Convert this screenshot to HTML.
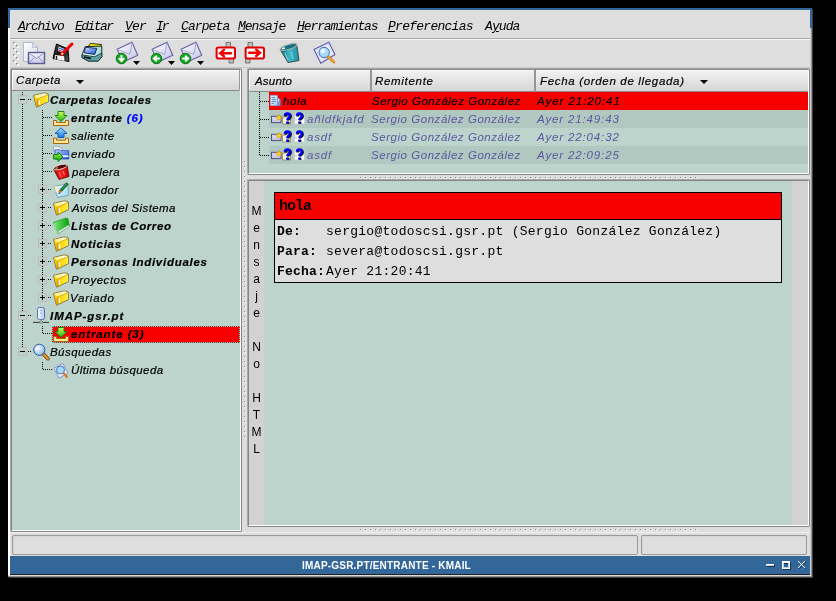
<!DOCTYPE html>
<html><head><meta charset="utf-8">
<style>
*{margin:0;padding:0;box-sizing:border-box}
html,body{width:836px;height:601px;overflow:hidden;background:#000}
body{position:relative;font-family:"Liberation Sans",sans-serif;font-size:11px;color:#000}
.a{position:absolute}
div.a:not(:empty){will-change:transform}
svg.a{overflow:visible}
.menu{font-family:"Liberation Mono",monospace;font-style:italic;font-size:13px;line-height:15px;white-space:nowrap}
.ht{font-style:italic;font-size:11.5px;letter-spacing:0.5px;line-height:14px;white-space:nowrap;-webkit-text-stroke:0.2px #000}
.ti{font-style:italic;font-size:11.5px;letter-spacing:0.5px;line-height:14px;white-space:nowrap;-webkit-text-stroke:0.2px currentColor}
.tb{font-weight:bold;letter-spacing:0.6px}
.mono{font-family:"Liberation Mono",monospace;white-space:pre}
.dv{background:repeating-linear-gradient(to bottom,#000 0,#000 1px,transparent 1px,transparent 2px);width:1px}
.dh{background:repeating-linear-gradient(to right,#000 0,#000 1px,transparent 1px,transparent 2px);height:1px}
</style></head><body>

<div class="a" style="left:8px;top:8px;width:804px;height:569px;background:#dedede"></div>
<div class="a" style="left:8px;top:8px;width:804px;height:2px;background:#336699"></div>
<div class="a" style="left:8px;top:8px;width:2px;height:20px;background:#336699"></div>
<div class="a" style="left:810px;top:8px;width:2px;height:20px;background:#336699"></div>
<div class="a" style="left:8px;top:28px;width:2px;height:549px;background:#fff"></div>
<div class="a" style="left:810px;top:28px;width:1px;height:549px;background:#d0d0d0"></div>
<div class="a" style="left:811px;top:28px;width:1px;height:550px;background:#909090"></div>
<div class="a" style="left:812px;top:9px;width:1px;height:569px;background:#404040"></div>
<div class="a menu" style="left:18.2px;top:19px;letter-spacing:-1.317px"><u>A</u>rchivo</div>
<div class="a menu" style="left:75.2px;top:19px;letter-spacing:-1.54px"><u>E</u>ditar</div>
<div class="a menu" style="left:124.8px;top:19px;letter-spacing:-0.85px"><u>V</u>er</div>
<div class="a menu" style="left:156.1px;top:19px;letter-spacing:-2.1px"><u>I</u>r</div>
<div class="a menu" style="left:180.6px;top:19px;letter-spacing:-0.901px"><u>C</u>arpeta</div>
<div class="a menu" style="left:238.2px;top:19px;letter-spacing:-1.034px"><u>M</u>ensaje</div>
<div class="a menu" style="left:296.6px;top:19px;letter-spacing:-1.091px"><u>H</u>erramientas</div>
<div class="a menu" style="left:388.0px;top:19px;letter-spacing:-0.737px"><u>P</u>referencias</div>
<div class="a menu" style="left:485.1px;top:19px;letter-spacing:-0.9px">A<u>y</u>uda</div>
<div class="a" style="left:10px;top:38px;width:800px;height:1px;background:#a8a8a8"></div>
<div class="a" style="left:10px;top:39px;width:800px;height:1px;background:#f6f6f6"></div>
<div class="a" style="left:13px;top:42px;width:2px;height:2px;background:#a8a8a8"></div>
<div class="a" style="left:14px;top:43px;width:2px;height:2px;background:#fafafa"></div>
<div class="a" style="left:13px;top:42px;width:1px;height:1px;background:#909090"></div>
<div class="a" style="left:13px;top:48px;width:2px;height:2px;background:#a8a8a8"></div>
<div class="a" style="left:14px;top:49px;width:2px;height:2px;background:#fafafa"></div>
<div class="a" style="left:13px;top:48px;width:1px;height:1px;background:#909090"></div>
<div class="a" style="left:13px;top:54px;width:2px;height:2px;background:#a8a8a8"></div>
<div class="a" style="left:14px;top:55px;width:2px;height:2px;background:#fafafa"></div>
<div class="a" style="left:13px;top:54px;width:1px;height:1px;background:#909090"></div>
<div class="a" style="left:13px;top:60px;width:2px;height:2px;background:#a8a8a8"></div>
<div class="a" style="left:14px;top:61px;width:2px;height:2px;background:#fafafa"></div>
<div class="a" style="left:13px;top:60px;width:1px;height:1px;background:#909090"></div>
<div class="a" style="left:16px;top:45px;width:2px;height:2px;background:#a8a8a8"></div>
<div class="a" style="left:17px;top:46px;width:2px;height:2px;background:#fafafa"></div>
<div class="a" style="left:16px;top:45px;width:1px;height:1px;background:#909090"></div>
<div class="a" style="left:16px;top:51px;width:2px;height:2px;background:#a8a8a8"></div>
<div class="a" style="left:17px;top:52px;width:2px;height:2px;background:#fafafa"></div>
<div class="a" style="left:16px;top:51px;width:1px;height:1px;background:#909090"></div>
<div class="a" style="left:16px;top:57px;width:2px;height:2px;background:#a8a8a8"></div>
<div class="a" style="left:17px;top:58px;width:2px;height:2px;background:#fafafa"></div>
<div class="a" style="left:16px;top:57px;width:1px;height:1px;background:#909090"></div>
<div class="a" style="left:16px;top:63px;width:2px;height:2px;background:#a8a8a8"></div>
<div class="a" style="left:17px;top:64px;width:2px;height:2px;background:#fafafa"></div>
<div class="a" style="left:16px;top:63px;width:1px;height:1px;background:#909090"></div>
<svg class="a" style="left:22px;top:41px" width="24" height="24" viewBox="0 0 24 24"><defs><linearGradient id="pg" x1="0" y1="0" x2="1" y2="1"><stop offset="0" stop-color="#ffffff"/><stop offset="1" stop-color="#d8dce8"/></linearGradient>
<linearGradient id="ev" x1="0" y1="0" x2="0" y2="1"><stop offset="0" stop-color="#f4f4fc"/><stop offset="1" stop-color="#c8c8e8"/></linearGradient></defs>
<path d="M1.5 1.5H10.5L15.5 6.5V20.5H1.5Z" fill="url(#pg)" stroke="#b0b8d0" stroke-width="1"/>
<path d="M10.5 1.5V6.5H15.5Z" fill="#e0e4f0" stroke="#b0b8d0" stroke-width="0.8"/>
<rect x="6.5" y="11.5" width="16" height="11" fill="url(#ev)" stroke="#5a5a90" stroke-width="1.4"/>
<path d="M7.5 12.5L14.5 17.5L21.5 12.5M7.5 21.5L12.5 16.5M21.5 21.5L16.5 16.5" fill="none" stroke="#8a8ab8" stroke-width="0.9"/></svg>
<svg class="a" style="left:52px;top:42px" width="22" height="21" viewBox="0 0 22 21"><defs><linearGradient id="fl" x1="0" y1="0" x2="1" y2="1"><stop offset="0" stop-color="#505050"/><stop offset="0.5" stop-color="#101010"/><stop offset="1" stop-color="#606060"/></linearGradient></defs>
<path d="M4.5 2L16 7L17 19.5L1 16.5Z" fill="url(#fl)" stroke="#000" stroke-width="1"/>
<path d="M6.5 4.5L13 7L12.5 11L6 9Z" fill="#e8f0ff"/>
<path d="M6.5 6L12.8 8.2" stroke="#3060e0" stroke-width="1.3"/>
<path d="M6.3 8L12.6 10" stroke="#e02020" stroke-width="1"/>
<path d="M3 13L12 14L12.5 19L2.5 17Z" fill="#f0f0f0"/>
<path d="M4.5 14V17.5" stroke="#202020" stroke-width="1.4"/>
<path d="M9.5 12.5L20 2" stroke="#f00000" stroke-width="3" stroke-linecap="round"/>
<path d="M9.5 12.5L11 11" stroke="#f0c080" stroke-width="2.2"/></svg>
<svg class="a" style="left:81px;top:42px" width="22" height="21" viewBox="0 0 22 21"><defs><linearGradient id="pr" x1="0" y1="0" x2="1" y2="0"><stop offset="0" stop-color="#e8ffff"/><stop offset="1" stop-color="#a8d8d8"/></linearGradient>
<linearGradient id="pb" x1="0" y1="0" x2="1" y2="1"><stop offset="0" stop-color="#d8e8ff"/><stop offset="0.6" stop-color="#5888f0"/><stop offset="1" stop-color="#3060d0"/></linearGradient></defs>
<path d="M9.4 1.4L20.8 2.6L18 5.7L7.2 4.6Z" fill="#ffee00" stroke="#202000" stroke-width="0.9"/>
<path d="M1.1 12.9L4.3 4.6L18 4.2L20.8 4.2L20.8 14.7L17.3 19L7.2 19L1 15.5Z" fill="url(#pr)" stroke="#102828" stroke-width="1"/>
<path d="M1.1 12.9L13.5 14.8L20.8 11L20.8 14.7L17.3 19L7.2 19L1 15.5Z" fill="#58a8a8" stroke="#102828" stroke-width="0.8"/>
<path d="M4.3 5.3L15.8 6.4L13.7 12.4L3.4 10.9Z" fill="url(#pb)" stroke="#102040" stroke-width="0.9"/>
<path d="M3 15L10 16.5" stroke="#000" stroke-width="1.6"/>
<circle cx="17.5" cy="15.5" r="0.7" fill="#e04040"/></svg>
<svg class="a" style="left:115px;top:41px" width="24" height="23" viewBox="0 0 24 23"><defs><linearGradient id="edown" x1="0" y1="0" x2="1" y2="1"><stop offset="0" stop-color="#ffffff"/><stop offset="1" stop-color="#c0c0e4"/></linearGradient></defs>
<path d="M2.1 8.2L17 1.2L22.8 14.2L8 21Z" fill="url(#edown)" stroke="#6464a8" stroke-width="1.1"/>
<path d="M2.6 8.6L14.7 13.3L17.2 1.8" fill="none" stroke="#a0a0cc" stroke-width="0.9"/>
<circle cx="6.5" cy="17.5" r="5.3" fill="#10a820" stroke="#005800" stroke-width="0.8"/>
<path d="M0 -3.4V2.4M-2.7 -0.3L0 2.7L2.7 -0.3" transform="translate(6.5,17.5)" fill="none" stroke="#fff" stroke-width="1.9"/></svg>
<svg class="a" style="left:133px;top:61px" width="7" height="4" viewBox="0 0 7 4"><path d="M0 0H7L3.5 4Z" fill="#000"/></svg>
<svg class="a" style="left:150px;top:41px" width="24" height="23" viewBox="0 0 24 23"><defs><linearGradient id="eleft" x1="0" y1="0" x2="1" y2="1"><stop offset="0" stop-color="#ffffff"/><stop offset="1" stop-color="#c0c0e4"/></linearGradient></defs>
<path d="M2.1 8.2L17 1.2L22.8 14.2L8 21Z" fill="url(#eleft)" stroke="#6464a8" stroke-width="1.1"/>
<path d="M2.6 8.6L14.7 13.3L17.2 1.8" fill="none" stroke="#a0a0cc" stroke-width="0.9"/>
<circle cx="6.5" cy="17.5" r="5.3" fill="#10a820" stroke="#005800" stroke-width="0.8"/>
<path d="M3.4 0H-2.4M0.3 -2.7L-2.7 0L0.3 2.7" transform="translate(6.5,17.5)" fill="none" stroke="#fff" stroke-width="1.9"/></svg>
<svg class="a" style="left:168px;top:61px" width="7" height="4" viewBox="0 0 7 4"><path d="M0 0H7L3.5 4Z" fill="#000"/></svg>
<svg class="a" style="left:179px;top:41px" width="24" height="23" viewBox="0 0 24 23"><defs><linearGradient id="eright" x1="0" y1="0" x2="1" y2="1"><stop offset="0" stop-color="#ffffff"/><stop offset="1" stop-color="#c0c0e4"/></linearGradient></defs>
<path d="M2.1 8.2L17 1.2L22.8 14.2L8 21Z" fill="url(#eright)" stroke="#6464a8" stroke-width="1.1"/>
<path d="M2.6 8.6L14.7 13.3L17.2 1.8" fill="none" stroke="#a0a0cc" stroke-width="0.9"/>
<circle cx="6.5" cy="17.5" r="5.3" fill="#10a820" stroke="#005800" stroke-width="0.8"/>
<path d="M-3.4 0H2.4M-0.3 -2.7L2.7 0L-0.3 2.7" transform="translate(6.5,17.5)" fill="none" stroke="#fff" stroke-width="1.9"/></svg>
<svg class="a" style="left:197px;top:61px" width="7" height="4" viewBox="0 0 7 4"><path d="M0 0H7L3.5 4Z" fill="#000"/></svg>
<svg class="a" style="left:215px;top:41px" width="22" height="23" viewBox="0 0 22 23"><path d="M11 1.5h4.5v5h-4.5z" fill="#c0c0c0" stroke="#606060" stroke-width="0.8"/>
<path d="M14 17.5h4.5v4.5h-4.5z" fill="#c0c0c0" stroke="#606060" stroke-width="0.8"/>
<rect x="1.6" y="6.6" width="18.4" height="11" rx="1.8" fill="#fafafa" stroke="#e00000" stroke-width="2"/>
<path d="M16 12.2H5.2M9 8.8L5.2 12.2L9 15.4" fill="none" stroke="#f00000" stroke-width="2.4" stroke-linecap="round"/></svg>
<svg class="a" style="left:244px;top:41px" width="22" height="23" viewBox="0 0 22 23"><path d="M4 1.5h4.5v5h-4.5z" fill="#c0c0c0" stroke="#606060" stroke-width="0.8"/>
<path d="M1.5 17.5h4.5v4.5h-4.5z" fill="#c0c0c0" stroke="#606060" stroke-width="0.8"/>
<rect x="1.6" y="6.6" width="18.4" height="11" rx="1.8" fill="#fafafa" stroke="#e00000" stroke-width="2"/>
<path d="M5.2 11.8H16M12.2 8.6L16 11.8L12.2 15" fill="none" stroke="#f00000" stroke-width="2.4" stroke-linecap="round"/></svg>
<svg class="a" style="left:279px;top:42px" width="22" height="22" viewBox="0 0 22 22"><defs><linearGradient id="tr" x1="0" y1="0" x2="1" y2="0"><stop offset="0" stop-color="#107080"/><stop offset="0.5" stop-color="#40b8c8"/><stop offset="1" stop-color="#2090a0"/></linearGradient></defs>
<path d="M1.2 7.5L17.7 2.5L20 18.5L9 20.5Z" fill="url(#tr)" stroke="#404848" stroke-width="1"/>
<ellipse cx="9.5" cy="5" rx="8.6" ry="2.4" transform="rotate(-17 9.5 5)" fill="#187080" stroke="#a8b0b0" stroke-width="1.2"/>
<path d="M3 6.8L6 6" stroke="#e0ffff" stroke-width="1.5"/>
<path d="M6 11L9 18M12 10L14 17" stroke="#70d0d8" stroke-width="1.2"/></svg>
<svg class="a" style="left:313px;top:41px" width="24" height="24" viewBox="0 0 24 24"><path d="M1 8.5L15.8 1.2L22 13.5L7.8 22.3Z" fill="#f0f0fc" stroke="#5858b0" stroke-width="1.1"/>
<path d="M3 9L15 3L20 13L8 20Z" fill="none" stroke="#d0d0ec" stroke-width="0.8"/>
<circle cx="11.2" cy="11.5" r="5.2" fill="#a8d8fc" stroke="#3870b0" stroke-width="1"/>
<circle cx="10" cy="10" r="2.4" fill="#e8f6ff"/>
<path d="M15.5 16L20.8 21" stroke="#d88010" stroke-width="2.8" stroke-linecap="round"/>
<path d="M15.5 16L20.8 21" stroke="#f8c060" stroke-width="1" stroke-linecap="round"/></svg>
<div class="a" style="left:10px;top:67px;width:800px;height:1px;background:#c8c8c8"></div>
<div class="a" style="left:10px;top:68px;width:232px;height:464px;background:#bcd4cc;border:1px solid;border-color:#a8a8a8 #858585 #858585 #a8a8a8;border-radius:2px;box-shadow:inset 1px 1px 0 #858585,inset -1px -1px 0 #ffffff"></div>
<div class="a" style="left:12px;top:70px;width:228px;height:21px;background:linear-gradient(#f2f2f2,#d6d6d6);border-right:1px solid #9a9a9a;border-bottom:1px solid #8a8a8a;border-radius:0 0 2px 0;box-shadow:inset 1px 1px 0 #fafafa"></div>
<div class="a ht" style="left:15.5px;top:73px;letter-spacing:0.583px">Carpeta</div>
<svg class="a" style="left:76px;top:80px" width="9" height="5" viewBox="0 0 9 5"><path d="M0 0H8L4 4Z" fill="#000"/></svg>
<div class="a dv" style="left:22px;top:92px;height:260px"></div>
<div class="a dv" style="left:42px;top:110px;height:188px"></div>
<div class="a dv" style="left:42px;top:326px;height:8px"></div>
<div class="a dv" style="left:42px;top:362px;height:8px"></div>
<div class="a" style="left:18px;top:95px;width:9px;height:9px;background:#bcd4cc;border:1px solid #c4b8b8"></div>
<div class="a" style="left:20px;top:99px;width:5px;height:1px;background:#000"></div>
<div class="a dh" style="left:28px;top:99px;width:3px"></div>
<svg class="a" style="left:32px;top:91px" width="18" height="18" viewBox="0 0 18 18"><defs><linearGradient id="fy" x1="0" y1="0" x2="1" y2="0"><stop offset="0" stop-color="#ffcc00"/><stop offset="1" stop-color="#fff040"/></linearGradient>
<linearGradient id="fb" x1="0" y1="0" x2="0" y2="1"><stop offset="0" stop-color="#ffe000"/><stop offset="1" stop-color="#f09800"/></linearGradient></defs>
<path d="M1.5 4.5L11 2.2L13.5 2L16.5 3.2L16.5 10.5L6 15.5L4.5 16.2Z" fill="#e0b000" stroke="#706440" stroke-width="0.9" stroke-linejoin="round"/>
<path d="M1.8 4.7L11 2.6L13.5 2.4L16 3.5L5.5 8Z" fill="#fff49a"/>
<path d="M10 3.2L13.5 2.8L15 3.5L11 5Z" fill="#ffffff"/>
<path d="M1.8 4.8L5.5 8L6 15.2L4.6 15.9Z" fill="url(#fb)"/>
<path d="M5.6 8.2L16.2 3.8L16.2 10.3L6.2 15Z" fill="url(#fy)"/>
<path d="M5.5 8L16.3 3.6" stroke="#c8a000" stroke-width="0.6"/>
<path d="M5.6 8.3L6.1 15" stroke="#c08000" stroke-width="0.7"/>
<path d="M7.4 9.2V13.8" stroke="#ffffff" stroke-width="1.3"/></svg>
<div class="a ti tb" style="left:50.0px;top:93px;letter-spacing:0.649px">Carpetas locales</div>
<div class="a dh" style="left:43px;top:117px;width:9px"></div>
<svg class="a" style="left:52px;top:109px" width="18" height="18" viewBox="-1 -2 18 18"><defs><linearGradient id="ga" x1="0" y1="0" x2="0" y2="1"><stop offset="0" stop-color="#d0ff60"/><stop offset="1" stop-color="#20b010"/></linearGradient></defs>
<path d="M3.5 0.5H9.5V4.5H12.5L6.5 10.5L0.5 4.5H3.5Z" transform="translate(1.5,0)" fill="url(#ga)" stroke="#108000" stroke-width="0.9"/>
<path d="M0.5 9.5H3.5V11.5H12.5V9.5H15.5V14.5H0.5Z" fill="#ffe898" stroke="#b06008" stroke-width="1"/></svg>
<div class="a ti tb" style="left:70.5px;top:111px;letter-spacing:0.805px">entrante <span style="color:#0000ff">(6)</span></div>
<div class="a dh" style="left:43px;top:135px;width:9px"></div>
<svg class="a" style="left:52px;top:127px" width="18" height="18" viewBox="-1 -2 18 18"><defs><linearGradient id="gb" x1="0" y1="0" x2="0" y2="1"><stop offset="0" stop-color="#a0e0ff"/><stop offset="1" stop-color="#1878e0"/></linearGradient></defs>
<path d="M3.5 8.5V4.5H0.5L6.5 -1.2L12.5 4.5H9.5V8.5Z" transform="translate(1.5,0)" fill="url(#gb)" stroke="#1050b0" stroke-width="0.9"/>
<path d="M0.5 9.2H3.5V11.2H12.5V9.2H15.5V14.5H0.5Z" fill="#ffe898" stroke="#b06008" stroke-width="1"/></svg>
<div class="a ti" style="left:70.5px;top:129px;letter-spacing:0.485px">saliente</div>
<div class="a dh" style="left:43px;top:153px;width:9px"></div>
<svg class="a" style="left:52px;top:145px" width="18" height="18" viewBox="-1 -2 18 18"><defs><linearGradient id="gs" x1="0" y1="0" x2="1" y2="1"><stop offset="0" stop-color="#b8d0ff"/><stop offset="1" stop-color="#2858e0"/></linearGradient>
<linearGradient id="gg" x1="0" y1="0" x2="0" y2="1"><stop offset="0" stop-color="#a0f040"/><stop offset="1" stop-color="#10a010"/></linearGradient></defs>
<path d="M0.5 -0.3H6L7 1H9V4H0.5Z" fill="#f8f8ff" stroke="#9098b0" stroke-width="0.7"/>
<path d="M2 2.7H7L8 3.7H15.8V12H2Z" fill="url(#gs)" stroke="#2040a0" stroke-width="0.7"/>
<path d="M9 9.2H15.3" stroke="#ffffff" stroke-width="1.5"/>
<path d="M0.5 7.5H5V5L10 9.8L5 14.6V12H0.5Z" fill="url(#gg)" stroke="#008000" stroke-width="0.9"/></svg>
<div class="a ti" style="left:70.5px;top:147px;letter-spacing:0.618px">enviado</div>
<div class="a dh" style="left:43px;top:171px;width:9px"></div>
<svg class="a" style="left:52px;top:163px" width="18" height="18" viewBox="-1 -2 18 18"><defs><linearGradient id="gt" x1="0" y1="0" x2="1" y2="0"><stop offset="0" stop-color="#a00000"/><stop offset="0.5" stop-color="#ff2020"/><stop offset="1" stop-color="#c00000"/></linearGradient></defs>
<path d="M0.5 4L14 0L16 11.5L6 14.5Z" fill="url(#gt)" stroke="#600000" stroke-width="0.8"/>
<ellipse cx="7.3" cy="2" rx="7" ry="2.2" transform="rotate(-16 7.3 2)" fill="#500000" stroke="#e8e0e0" stroke-width="0.9"/>
<path d="M2.5 3.5L5 2.6" stroke="#ff9020" stroke-width="1.3"/>
<path d="M6 7L8 12M10 6L11.5 10" stroke="#ff9090" stroke-width="0.9"/></svg>
<div class="a ti" style="left:71.5px;top:165px;letter-spacing:0.413px">papelera</div>
<div class="a" style="left:38px;top:185px;width:9px;height:9px;background:#bcd4cc;border:1px solid #c4b8b8"></div>
<div class="a" style="left:40px;top:189px;width:5px;height:1px;background:#000"></div>
<div class="a" style="left:42px;top:187px;width:1px;height:5px;background:#000"></div>
<div class="a dh" style="left:48px;top:189px;width:3px"></div>
<svg class="a" style="left:52px;top:181px" width="18" height="18" viewBox="-1 -2 18 18"><defs><linearGradient id="gd" x1="0" y1="0" x2="1" y2="1"><stop offset="0" stop-color="#f4faff"/><stop offset="1" stop-color="#90e0f8"/></linearGradient></defs>
<path d="M1 3.5L15 0.5L15.3 12.5L4.5 14.3Z" fill="url(#gd)" stroke="#7890b0" stroke-width="0.8"/>
<path d="M1.3 3.6L3.6 3.1L4.2 9.2L2.6 8.8Z" fill="#fff4a0"/>
<path d="M7 8.6L14.6 0.2" stroke="#106828" stroke-width="3"/>
<path d="M8.5 6.5L14 0.6" stroke="#50c060" stroke-width="0.9"/>
<path d="M6.2 9.6L8 7.6" stroke="#f07030" stroke-width="2.4"/>
<path d="M5.8 10.6L6.4 9.8" stroke="#000" stroke-width="1.2"/></svg>
<div class="a ti" style="left:70.5px;top:183px;letter-spacing:0.556px">borrador</div>
<div class="a" style="left:38px;top:203px;width:9px;height:9px;background:#bcd4cc;border:1px solid #c4b8b8"></div>
<div class="a" style="left:40px;top:207px;width:5px;height:1px;background:#000"></div>
<div class="a" style="left:42px;top:205px;width:1px;height:5px;background:#000"></div>
<div class="a dh" style="left:48px;top:207px;width:3px"></div>
<svg class="a" style="left:52px;top:199px" width="18" height="18" viewBox="0 0 18 18"><defs><linearGradient id="fy" x1="0" y1="0" x2="1" y2="0"><stop offset="0" stop-color="#ffcc00"/><stop offset="1" stop-color="#fff040"/></linearGradient>
<linearGradient id="fb" x1="0" y1="0" x2="0" y2="1"><stop offset="0" stop-color="#ffe000"/><stop offset="1" stop-color="#f09800"/></linearGradient></defs>
<path d="M1.5 4.5L11 2.2L13.5 2L16.5 3.2L16.5 10.5L6 15.5L4.5 16.2Z" fill="#e0b000" stroke="#706440" stroke-width="0.9" stroke-linejoin="round"/>
<path d="M1.8 4.7L11 2.6L13.5 2.4L16 3.5L5.5 8Z" fill="#fff49a"/>
<path d="M10 3.2L13.5 2.8L15 3.5L11 5Z" fill="#ffffff"/>
<path d="M1.8 4.8L5.5 8L6 15.2L4.6 15.9Z" fill="url(#fb)"/>
<path d="M5.6 8.2L16.2 3.8L16.2 10.3L6.2 15Z" fill="url(#fy)"/>
<path d="M5.5 8L16.3 3.6" stroke="#c8a000" stroke-width="0.6"/>
<path d="M5.6 8.3L6.1 15" stroke="#c08000" stroke-width="0.7"/>
<path d="M7.4 9.2V13.8" stroke="#ffffff" stroke-width="1.3"/></svg>
<div class="a ti" style="left:71.5px;top:201px;letter-spacing:0.376px">Avisos del Sistema</div>
<div class="a" style="left:38px;top:221px;width:9px;height:9px;background:#bcd4cc;border:1px solid #c4b8b8"></div>
<div class="a" style="left:40px;top:225px;width:5px;height:1px;background:#000"></div>
<div class="a" style="left:42px;top:223px;width:1px;height:5px;background:#000"></div>
<div class="a dh" style="left:48px;top:225px;width:3px"></div>
<svg class="a" style="left:52px;top:217px" width="18" height="18" viewBox="1 0 18 18"><defs><linearGradient id="gf" x1="0" y1="0" x2="1" y2="0"><stop offset="0" stop-color="#80e880"/><stop offset="1" stop-color="#00a000"/></linearGradient></defs>
<path d="M2.3 5.5L14.5 1.2L16.8 1.3L18.5 9L7.5 16.5L6.5 16Z" fill="url(#gf)" stroke="#209020" stroke-width="0.7"/>
<path d="M3 6L6 15.5" stroke="#b0f0b0" stroke-width="0.8"/>
<path d="M7.2 15.6L17.8 8.6" stroke="#f0e8ff" stroke-width="1.4"/></svg>
<div class="a ti tb" style="left:70.5px;top:219px;letter-spacing:0.616px">Listas de Correo</div>
<div class="a" style="left:38px;top:239px;width:9px;height:9px;background:#bcd4cc;border:1px solid #c4b8b8"></div>
<div class="a" style="left:40px;top:243px;width:5px;height:1px;background:#000"></div>
<div class="a" style="left:42px;top:241px;width:1px;height:5px;background:#000"></div>
<div class="a dh" style="left:48px;top:243px;width:3px"></div>
<svg class="a" style="left:52px;top:235px" width="18" height="18" viewBox="0 0 18 18"><defs><linearGradient id="fy" x1="0" y1="0" x2="1" y2="0"><stop offset="0" stop-color="#ffcc00"/><stop offset="1" stop-color="#fff040"/></linearGradient>
<linearGradient id="fb" x1="0" y1="0" x2="0" y2="1"><stop offset="0" stop-color="#ffe000"/><stop offset="1" stop-color="#f09800"/></linearGradient></defs>
<path d="M1.5 4.5L11 2.2L13.5 2L16.5 3.2L16.5 10.5L6 15.5L4.5 16.2Z" fill="#e0b000" stroke="#706440" stroke-width="0.9" stroke-linejoin="round"/>
<path d="M1.8 4.7L11 2.6L13.5 2.4L16 3.5L5.5 8Z" fill="#fff49a"/>
<path d="M10 3.2L13.5 2.8L15 3.5L11 5Z" fill="#ffffff"/>
<path d="M1.8 4.8L5.5 8L6 15.2L4.6 15.9Z" fill="url(#fb)"/>
<path d="M5.6 8.2L16.2 3.8L16.2 10.3L6.2 15Z" fill="url(#fy)"/>
<path d="M5.5 8L16.3 3.6" stroke="#c8a000" stroke-width="0.6"/>
<path d="M5.6 8.3L6.1 15" stroke="#c08000" stroke-width="0.7"/>
<path d="M7.4 9.2V13.8" stroke="#ffffff" stroke-width="1.3"/></svg>
<div class="a ti tb" style="left:70.5px;top:237px;letter-spacing:0.778px">Noticias</div>
<div class="a" style="left:38px;top:257px;width:9px;height:9px;background:#bcd4cc;border:1px solid #c4b8b8"></div>
<div class="a" style="left:40px;top:261px;width:5px;height:1px;background:#000"></div>
<div class="a" style="left:42px;top:259px;width:1px;height:5px;background:#000"></div>
<div class="a dh" style="left:48px;top:261px;width:3px"></div>
<svg class="a" style="left:52px;top:253px" width="18" height="18" viewBox="0 0 18 18"><defs><linearGradient id="fy" x1="0" y1="0" x2="1" y2="0"><stop offset="0" stop-color="#ffcc00"/><stop offset="1" stop-color="#fff040"/></linearGradient>
<linearGradient id="fb" x1="0" y1="0" x2="0" y2="1"><stop offset="0" stop-color="#ffe000"/><stop offset="1" stop-color="#f09800"/></linearGradient></defs>
<path d="M1.5 4.5L11 2.2L13.5 2L16.5 3.2L16.5 10.5L6 15.5L4.5 16.2Z" fill="#e0b000" stroke="#706440" stroke-width="0.9" stroke-linejoin="round"/>
<path d="M1.8 4.7L11 2.6L13.5 2.4L16 3.5L5.5 8Z" fill="#fff49a"/>
<path d="M10 3.2L13.5 2.8L15 3.5L11 5Z" fill="#ffffff"/>
<path d="M1.8 4.8L5.5 8L6 15.2L4.6 15.9Z" fill="url(#fb)"/>
<path d="M5.6 8.2L16.2 3.8L16.2 10.3L6.2 15Z" fill="url(#fy)"/>
<path d="M5.5 8L16.3 3.6" stroke="#c8a000" stroke-width="0.6"/>
<path d="M5.6 8.3L6.1 15" stroke="#c08000" stroke-width="0.7"/>
<path d="M7.4 9.2V13.8" stroke="#ffffff" stroke-width="1.3"/></svg>
<div class="a ti tb" style="left:70.5px;top:255px;letter-spacing:0.725px">Personas Individuales</div>
<div class="a" style="left:38px;top:275px;width:9px;height:9px;background:#bcd4cc;border:1px solid #c4b8b8"></div>
<div class="a" style="left:40px;top:279px;width:5px;height:1px;background:#000"></div>
<div class="a" style="left:42px;top:277px;width:1px;height:5px;background:#000"></div>
<div class="a dh" style="left:48px;top:279px;width:3px"></div>
<svg class="a" style="left:52px;top:271px" width="18" height="18" viewBox="0 0 18 18"><defs><linearGradient id="fy" x1="0" y1="0" x2="1" y2="0"><stop offset="0" stop-color="#ffcc00"/><stop offset="1" stop-color="#fff040"/></linearGradient>
<linearGradient id="fb" x1="0" y1="0" x2="0" y2="1"><stop offset="0" stop-color="#ffe000"/><stop offset="1" stop-color="#f09800"/></linearGradient></defs>
<path d="M1.5 4.5L11 2.2L13.5 2L16.5 3.2L16.5 10.5L6 15.5L4.5 16.2Z" fill="#e0b000" stroke="#706440" stroke-width="0.9" stroke-linejoin="round"/>
<path d="M1.8 4.7L11 2.6L13.5 2.4L16 3.5L5.5 8Z" fill="#fff49a"/>
<path d="M10 3.2L13.5 2.8L15 3.5L11 5Z" fill="#ffffff"/>
<path d="M1.8 4.8L5.5 8L6 15.2L4.6 15.9Z" fill="url(#fb)"/>
<path d="M5.6 8.2L16.2 3.8L16.2 10.3L6.2 15Z" fill="url(#fy)"/>
<path d="M5.5 8L16.3 3.6" stroke="#c8a000" stroke-width="0.6"/>
<path d="M5.6 8.3L6.1 15" stroke="#c08000" stroke-width="0.7"/>
<path d="M7.4 9.2V13.8" stroke="#ffffff" stroke-width="1.3"/></svg>
<div class="a ti" style="left:70.5px;top:273px;letter-spacing:0.515px">Proyectos</div>
<div class="a" style="left:38px;top:293px;width:9px;height:9px;background:#bcd4cc;border:1px solid #c4b8b8"></div>
<div class="a" style="left:40px;top:297px;width:5px;height:1px;background:#000"></div>
<div class="a" style="left:42px;top:295px;width:1px;height:5px;background:#000"></div>
<div class="a dh" style="left:48px;top:297px;width:3px"></div>
<svg class="a" style="left:52px;top:289px" width="18" height="18" viewBox="0 0 18 18"><defs><linearGradient id="fy" x1="0" y1="0" x2="1" y2="0"><stop offset="0" stop-color="#ffcc00"/><stop offset="1" stop-color="#fff040"/></linearGradient>
<linearGradient id="fb" x1="0" y1="0" x2="0" y2="1"><stop offset="0" stop-color="#ffe000"/><stop offset="1" stop-color="#f09800"/></linearGradient></defs>
<path d="M1.5 4.5L11 2.2L13.5 2L16.5 3.2L16.5 10.5L6 15.5L4.5 16.2Z" fill="#e0b000" stroke="#706440" stroke-width="0.9" stroke-linejoin="round"/>
<path d="M1.8 4.7L11 2.6L13.5 2.4L16 3.5L5.5 8Z" fill="#fff49a"/>
<path d="M10 3.2L13.5 2.8L15 3.5L11 5Z" fill="#ffffff"/>
<path d="M1.8 4.8L5.5 8L6 15.2L4.6 15.9Z" fill="url(#fb)"/>
<path d="M5.6 8.2L16.2 3.8L16.2 10.3L6.2 15Z" fill="url(#fy)"/>
<path d="M5.5 8L16.3 3.6" stroke="#c8a000" stroke-width="0.6"/>
<path d="M5.6 8.3L6.1 15" stroke="#c08000" stroke-width="0.7"/>
<path d="M7.4 9.2V13.8" stroke="#ffffff" stroke-width="1.3"/></svg>
<div class="a ti" style="left:69.5px;top:291px;letter-spacing:0.783px">Variado</div>
<div class="a" style="left:18px;top:311px;width:9px;height:9px;background:#bcd4cc;border:1px solid #c4b8b8"></div>
<div class="a" style="left:20px;top:315px;width:5px;height:1px;background:#000"></div>
<div class="a dh" style="left:28px;top:315px;width:3px"></div>
<svg class="a" style="left:32px;top:307px" width="18" height="18" viewBox="-1 -2 18 18"><defs><linearGradient id="gsv" x1="0" y1="0" x2="1" y2="0"><stop offset="0" stop-color="#ffffff"/><stop offset="1" stop-color="#b0c8f0"/></linearGradient></defs>
<rect x="4.5" y="-1.5" width="7" height="12" rx="1.8" fill="url(#gsv)" stroke="#4868b0" stroke-width="0.9"/>
<path d="M8 1V2M8 3.5V4.5" stroke="#5070a0" stroke-width="0.9"/>
<path d="M0 13.4H16" stroke="#202020" stroke-width="0.9"/>
<path d="M6 13.4L8 11.4L10 13.4L8 14.4Z" fill="#d0d0d0" stroke="#404040" stroke-width="0.6"/></svg>
<div class="a ti tb" style="left:50.0px;top:309px;letter-spacing:0.95px">IMAP-gsr.pt</div>
<div class="a" style="left:52px;top:326px;width:188px;height:17px;background:#f60000;outline:1px dotted #30e8e8;outline-offset:-1px"></div>
<div class="a dh" style="left:43px;top:333px;width:9px"></div>
<svg class="a" style="left:52px;top:325px" width="18" height="18" viewBox="-1 -2 18 18"><defs><linearGradient id="ga" x1="0" y1="0" x2="0" y2="1"><stop offset="0" stop-color="#d0ff60"/><stop offset="1" stop-color="#20b010"/></linearGradient></defs>
<path d="M3.5 0.5H9.5V4.5H12.5L6.5 10.5L0.5 4.5H3.5Z" transform="translate(1.5,0)" fill="url(#ga)" stroke="#108000" stroke-width="0.9"/>
<path d="M0.5 9.5H3.5V11.5H12.5V9.5H15.5V14.5H0.5Z" fill="#ffe898" stroke="#b06008" stroke-width="1"/></svg>
<div class="a ti tb" style="left:70.5px;top:327px;letter-spacing:0.897px">entrante (3)</div>
<div class="a" style="left:18px;top:347px;width:9px;height:9px;background:#bcd4cc;border:1px solid #c4b8b8"></div>
<div class="a" style="left:20px;top:351px;width:5px;height:1px;background:#000"></div>
<div class="a dh" style="left:28px;top:351px;width:3px"></div>
<svg class="a" style="left:32px;top:343px" width="18" height="18" viewBox="-1 -2 18 18"><defs><radialGradient id="gl" cx="0.35" cy="0.35" r="0.7"><stop offset="0" stop-color="#ffffff"/><stop offset="1" stop-color="#88b8f0"/></radialGradient></defs>
<path d="M10.3 9L15 13.8" stroke="#603000" stroke-width="3.4" stroke-linecap="round"/>
<path d="M10.3 9L15 13.8" stroke="#e8a030" stroke-width="2" stroke-linecap="round"/>
<circle cx="6.3" cy="4.8" r="5.6" fill="url(#gl)" stroke="#2858a0" stroke-width="1"/></svg>
<div class="a ti" style="left:50.0px;top:345px;letter-spacing:0.45px">Búsquedas</div>
<div class="a dh" style="left:43px;top:369px;width:9px"></div>
<svg class="a" style="left:52px;top:361px" width="18" height="18" viewBox="-1 -2 18 18"><path d="M1 5L10 0.5L15 10L6 15Z" fill="#ececff" stroke="#8080c0" stroke-width="0.8"/>
<circle cx="7.5" cy="7" r="4" fill="#a8d8ff" stroke="#3070b0" stroke-width="0.9"/>
<path d="M10.5 10L14 14" stroke="#d08020" stroke-width="2" stroke-linecap="round"/></svg>
<div class="a ti" style="left:70.5px;top:363px;letter-spacing:0.414px">Última búsqueda</div>
<div class="a" style="left:244px;top:161px;width:1px;height:1px;background:#8a8a8a"></div>
<div class="a" style="left:245px;top:162px;width:1px;height:1px;background:#fff"></div>
<div class="a" style="left:244px;top:166px;width:1px;height:1px;background:#8a8a8a"></div>
<div class="a" style="left:245px;top:167px;width:1px;height:1px;background:#fff"></div>
<div class="a" style="left:244px;top:171px;width:1px;height:1px;background:#8a8a8a"></div>
<div class="a" style="left:245px;top:172px;width:1px;height:1px;background:#fff"></div>
<div class="a" style="left:244px;top:176px;width:1px;height:1px;background:#8a8a8a"></div>
<div class="a" style="left:245px;top:177px;width:1px;height:1px;background:#fff"></div>
<div class="a" style="left:244px;top:181px;width:1px;height:1px;background:#8a8a8a"></div>
<div class="a" style="left:245px;top:182px;width:1px;height:1px;background:#fff"></div>
<div class="a" style="left:244px;top:186px;width:1px;height:1px;background:#8a8a8a"></div>
<div class="a" style="left:245px;top:187px;width:1px;height:1px;background:#fff"></div>
<div class="a" style="left:244px;top:191px;width:1px;height:1px;background:#8a8a8a"></div>
<div class="a" style="left:245px;top:192px;width:1px;height:1px;background:#fff"></div>
<div class="a" style="left:244px;top:196px;width:1px;height:1px;background:#8a8a8a"></div>
<div class="a" style="left:245px;top:197px;width:1px;height:1px;background:#fff"></div>
<div class="a" style="left:244px;top:201px;width:1px;height:1px;background:#8a8a8a"></div>
<div class="a" style="left:245px;top:202px;width:1px;height:1px;background:#fff"></div>
<div class="a" style="left:244px;top:206px;width:1px;height:1px;background:#8a8a8a"></div>
<div class="a" style="left:245px;top:207px;width:1px;height:1px;background:#fff"></div>
<div class="a" style="left:244px;top:211px;width:1px;height:1px;background:#8a8a8a"></div>
<div class="a" style="left:245px;top:212px;width:1px;height:1px;background:#fff"></div>
<div class="a" style="left:244px;top:216px;width:1px;height:1px;background:#8a8a8a"></div>
<div class="a" style="left:245px;top:217px;width:1px;height:1px;background:#fff"></div>
<div class="a" style="left:244px;top:221px;width:1px;height:1px;background:#8a8a8a"></div>
<div class="a" style="left:245px;top:222px;width:1px;height:1px;background:#fff"></div>
<div class="a" style="left:244px;top:226px;width:1px;height:1px;background:#8a8a8a"></div>
<div class="a" style="left:245px;top:227px;width:1px;height:1px;background:#fff"></div>
<div class="a" style="left:244px;top:231px;width:1px;height:1px;background:#8a8a8a"></div>
<div class="a" style="left:245px;top:232px;width:1px;height:1px;background:#fff"></div>
<div class="a" style="left:244px;top:236px;width:1px;height:1px;background:#8a8a8a"></div>
<div class="a" style="left:245px;top:237px;width:1px;height:1px;background:#fff"></div>
<div class="a" style="left:244px;top:241px;width:1px;height:1px;background:#8a8a8a"></div>
<div class="a" style="left:245px;top:242px;width:1px;height:1px;background:#fff"></div>
<div class="a" style="left:244px;top:246px;width:1px;height:1px;background:#8a8a8a"></div>
<div class="a" style="left:245px;top:247px;width:1px;height:1px;background:#fff"></div>
<div class="a" style="left:244px;top:251px;width:1px;height:1px;background:#8a8a8a"></div>
<div class="a" style="left:245px;top:252px;width:1px;height:1px;background:#fff"></div>
<div class="a" style="left:244px;top:256px;width:1px;height:1px;background:#8a8a8a"></div>
<div class="a" style="left:245px;top:257px;width:1px;height:1px;background:#fff"></div>
<div class="a" style="left:244px;top:261px;width:1px;height:1px;background:#8a8a8a"></div>
<div class="a" style="left:245px;top:262px;width:1px;height:1px;background:#fff"></div>
<div class="a" style="left:244px;top:266px;width:1px;height:1px;background:#8a8a8a"></div>
<div class="a" style="left:245px;top:267px;width:1px;height:1px;background:#fff"></div>
<div class="a" style="left:244px;top:271px;width:1px;height:1px;background:#8a8a8a"></div>
<div class="a" style="left:245px;top:272px;width:1px;height:1px;background:#fff"></div>
<div class="a" style="left:244px;top:276px;width:1px;height:1px;background:#8a8a8a"></div>
<div class="a" style="left:245px;top:277px;width:1px;height:1px;background:#fff"></div>
<div class="a" style="left:244px;top:281px;width:1px;height:1px;background:#8a8a8a"></div>
<div class="a" style="left:245px;top:282px;width:1px;height:1px;background:#fff"></div>
<div class="a" style="left:244px;top:286px;width:1px;height:1px;background:#8a8a8a"></div>
<div class="a" style="left:245px;top:287px;width:1px;height:1px;background:#fff"></div>
<div class="a" style="left:244px;top:291px;width:1px;height:1px;background:#8a8a8a"></div>
<div class="a" style="left:245px;top:292px;width:1px;height:1px;background:#fff"></div>
<div class="a" style="left:244px;top:296px;width:1px;height:1px;background:#8a8a8a"></div>
<div class="a" style="left:245px;top:297px;width:1px;height:1px;background:#fff"></div>
<div class="a" style="left:244px;top:301px;width:1px;height:1px;background:#8a8a8a"></div>
<div class="a" style="left:245px;top:302px;width:1px;height:1px;background:#fff"></div>
<div class="a" style="left:244px;top:306px;width:1px;height:1px;background:#8a8a8a"></div>
<div class="a" style="left:245px;top:307px;width:1px;height:1px;background:#fff"></div>
<div class="a" style="left:244px;top:311px;width:1px;height:1px;background:#8a8a8a"></div>
<div class="a" style="left:245px;top:312px;width:1px;height:1px;background:#fff"></div>
<div class="a" style="left:244px;top:316px;width:1px;height:1px;background:#8a8a8a"></div>
<div class="a" style="left:245px;top:317px;width:1px;height:1px;background:#fff"></div>
<div class="a" style="left:244px;top:321px;width:1px;height:1px;background:#8a8a8a"></div>
<div class="a" style="left:245px;top:322px;width:1px;height:1px;background:#fff"></div>
<div class="a" style="left:244px;top:326px;width:1px;height:1px;background:#8a8a8a"></div>
<div class="a" style="left:245px;top:327px;width:1px;height:1px;background:#fff"></div>
<div class="a" style="left:244px;top:331px;width:1px;height:1px;background:#8a8a8a"></div>
<div class="a" style="left:245px;top:332px;width:1px;height:1px;background:#fff"></div>
<div class="a" style="left:244px;top:336px;width:1px;height:1px;background:#8a8a8a"></div>
<div class="a" style="left:245px;top:337px;width:1px;height:1px;background:#fff"></div>
<div class="a" style="left:244px;top:341px;width:1px;height:1px;background:#8a8a8a"></div>
<div class="a" style="left:245px;top:342px;width:1px;height:1px;background:#fff"></div>
<div class="a" style="left:244px;top:346px;width:1px;height:1px;background:#8a8a8a"></div>
<div class="a" style="left:245px;top:347px;width:1px;height:1px;background:#fff"></div>
<div class="a" style="left:244px;top:351px;width:1px;height:1px;background:#8a8a8a"></div>
<div class="a" style="left:245px;top:352px;width:1px;height:1px;background:#fff"></div>
<div class="a" style="left:244px;top:356px;width:1px;height:1px;background:#8a8a8a"></div>
<div class="a" style="left:245px;top:357px;width:1px;height:1px;background:#fff"></div>
<div class="a" style="left:244px;top:361px;width:1px;height:1px;background:#8a8a8a"></div>
<div class="a" style="left:245px;top:362px;width:1px;height:1px;background:#fff"></div>
<div class="a" style="left:244px;top:366px;width:1px;height:1px;background:#8a8a8a"></div>
<div class="a" style="left:245px;top:367px;width:1px;height:1px;background:#fff"></div>
<div class="a" style="left:244px;top:371px;width:1px;height:1px;background:#8a8a8a"></div>
<div class="a" style="left:245px;top:372px;width:1px;height:1px;background:#fff"></div>
<div class="a" style="left:244px;top:376px;width:1px;height:1px;background:#8a8a8a"></div>
<div class="a" style="left:245px;top:377px;width:1px;height:1px;background:#fff"></div>
<div class="a" style="left:244px;top:381px;width:1px;height:1px;background:#8a8a8a"></div>
<div class="a" style="left:245px;top:382px;width:1px;height:1px;background:#fff"></div>
<div class="a" style="left:244px;top:386px;width:1px;height:1px;background:#8a8a8a"></div>
<div class="a" style="left:245px;top:387px;width:1px;height:1px;background:#fff"></div>
<div class="a" style="left:244px;top:391px;width:1px;height:1px;background:#8a8a8a"></div>
<div class="a" style="left:245px;top:392px;width:1px;height:1px;background:#fff"></div>
<div class="a" style="left:244px;top:396px;width:1px;height:1px;background:#8a8a8a"></div>
<div class="a" style="left:245px;top:397px;width:1px;height:1px;background:#fff"></div>
<div class="a" style="left:244px;top:401px;width:1px;height:1px;background:#8a8a8a"></div>
<div class="a" style="left:245px;top:402px;width:1px;height:1px;background:#fff"></div>
<div class="a" style="left:244px;top:406px;width:1px;height:1px;background:#8a8a8a"></div>
<div class="a" style="left:245px;top:407px;width:1px;height:1px;background:#fff"></div>
<div class="a" style="left:244px;top:411px;width:1px;height:1px;background:#8a8a8a"></div>
<div class="a" style="left:245px;top:412px;width:1px;height:1px;background:#fff"></div>
<div class="a" style="left:244px;top:416px;width:1px;height:1px;background:#8a8a8a"></div>
<div class="a" style="left:245px;top:417px;width:1px;height:1px;background:#fff"></div>
<div class="a" style="left:244px;top:421px;width:1px;height:1px;background:#8a8a8a"></div>
<div class="a" style="left:245px;top:422px;width:1px;height:1px;background:#fff"></div>
<div class="a" style="left:244px;top:426px;width:1px;height:1px;background:#8a8a8a"></div>
<div class="a" style="left:245px;top:427px;width:1px;height:1px;background:#fff"></div>
<div class="a" style="left:244px;top:431px;width:1px;height:1px;background:#8a8a8a"></div>
<div class="a" style="left:245px;top:432px;width:1px;height:1px;background:#fff"></div>
<div class="a" style="left:244px;top:436px;width:1px;height:1px;background:#8a8a8a"></div>
<div class="a" style="left:245px;top:437px;width:1px;height:1px;background:#fff"></div>
<div class="a" style="left:247px;top:68px;width:563px;height:107px;background:#bcd4cc;border:1px solid;border-color:#a8a8a8 #858585 #858585 #a8a8a8;border-radius:2px;box-shadow:inset 1px 1px 0 #858585,inset -1px -1px 0 #ffffff"></div>
<div class="a" style="left:249px;top:70px;width:559px;height:22px;background:linear-gradient(#f2f2f2,#d6d6d6);border-bottom:1px solid #8a8a8a;border-radius:0 0 2px 2px;box-shadow:inset 1px 1px 0 #fafafa"></div>
<div class="a" style="left:370px;top:70px;width:2px;height:22px;background:#959595"></div>
<div class="a" style="left:534px;top:70px;width:2px;height:22px;background:#959595"></div>
<div class="a ht" style="left:254.5px;top:74px;letter-spacing:0.2px">Asunto</div>
<div class="a ht" style="left:374.5px;top:74px;letter-spacing:0.688px">Remitente</div>
<div class="a ht" style="left:539.5px;top:74px;letter-spacing:0.673px">Fecha (orden de llegada)</div>
<svg class="a" style="left:700px;top:80px" width="9" height="5" viewBox="0 0 9 5"><path d="M0 0H8L4 4Z" fill="#000"/></svg>
<div class="a dv" style="left:259px;top:92px;height:64px"></div>
<div class="a" style="left:269px;top:92px;width:539px;height:18px;background:#f60000"></div>
<div class="a dh" style="left:260px;top:101px;width:9px"></div>
<svg class="a" style="left:266px;top:92px" width="18" height="18" viewBox="0 0 18 18"><defs><linearGradient id="dg" x1="0" y1="0" x2="1" y2="1"><stop offset="0" stop-color="#f0f8ff"/><stop offset="1" stop-color="#a8c8f0"/></linearGradient></defs>
<path d="M11.2 5.6L14.6 7.2V14H11.2Z" fill="#8890d0" stroke="#5060a0" stroke-width="0.6"/>
<path d="M12 6.5C13 7 13 9 12 9.5" fill="none" stroke="#e8f0ff" stroke-width="0.9"/>
<rect x="4.2" y="3.2" width="7.4" height="10.6" fill="url(#dg)" stroke="#6890c8" stroke-width="0.5"/>
<path d="M5.6 5.5H9M5.6 7.5H9.8M5.6 9.5H9.8M5.6 11.5H7.8" stroke="#5878b8" stroke-width="0.9"/></svg>
<div class="a ti" style="left:283.0px;top:94px;color:#000;letter-spacing:0.667px">hola</div>
<div class="a ti" style="left:372.0px;top:94px;color:#000;letter-spacing:0.5px">Sergio González González</div>
<div class="a ti" style="left:536.5px;top:94px;color:#000;letter-spacing:0.942px">Ayer 21:20:41</div>
<div class="a" style="left:269px;top:110px;width:539px;height:18px;background:#b0c8c0"></div>
<div class="a dh" style="left:260px;top:119px;width:9px"></div>
<svg class="a" style="left:268px;top:110px" width="40" height="18" viewBox="0 0 40 18"><rect x="3.5" y="6.3" width="9.5" height="6.3" fill="#c8c8e8" stroke="#505080" stroke-width="1"/>
<path d="M4.5 7.5L8 10L11 8" fill="none" stroke="#f0f0ff" stroke-width="0.8"/>
<path d="M11 4.2L11.9 6.4L14.2 6.6L12.4 8.1L13 10.4L11 9.1L9 10.4L9.6 8.1L7.8 6.6L10.1 6.4Z" fill="#ffd820" stroke="#d09000" stroke-width="0.5"/><path d="M14.5 7.5L19 6.5L22.5 8V14L14.5 14Z" fill="#f4f0e0" stroke="#807850" stroke-width="0.7"/><path d="M16.8 5.8C16.8 2.5 21.8 2.5 21.8 5.8C21.8 8 19.3 8 19.3 10" fill="none" stroke="#000" stroke-width="2.6" transform="translate(0.8,0.6)"/>
<path d="M19.3 11.5V13.5" stroke="#000" stroke-width="2.6" transform="translate(0.8,0.3)"/>
<path d="M16.8 5.8C16.8 2.5 21.8 2.5 21.8 5.8C21.8 8 19.3 8 19.3 10" fill="none" stroke="#0000ff" stroke-width="2.4"/>
<path d="M19.3 11.5V13.5" stroke="#0000ff" stroke-width="2.4"/><rect x="26.5" y="3.5" width="10" height="10.5" fill="#ffffff" stroke="#c8c8c8" stroke-width="0.8"/>
<path d="M28 8.5V11" stroke="#a0a0e0" stroke-width="0.8"/><path d="M28.8 5.8C28.8 2.5 33.8 2.5 33.8 5.8C33.8 8 31.3 8 31.3 10" fill="none" stroke="#000" stroke-width="2.6" transform="translate(0.8,0.6)"/>
<path d="M31.3 11.5V13.5" stroke="#000" stroke-width="2.6" transform="translate(0.8,0.3)"/>
<path d="M28.8 5.8C28.8 2.5 33.8 2.5 33.8 5.8C33.8 8 31.3 8 31.3 10" fill="none" stroke="#0000ff" stroke-width="2.4"/>
<path d="M31.3 11.5V13.5" stroke="#0000ff" stroke-width="2.4"/></svg>
<div class="a ti" style="left:307.0px;top:112px;color:#5c57a0;letter-spacing:0.832px;-webkit-text-stroke:0">añldfkjafd</div>
<div class="a ti" style="left:371.0px;top:112px;color:#5c57a0;letter-spacing:0.543px;-webkit-text-stroke:0">Sergio González González</div>
<div class="a ti" style="left:536.5px;top:112px;color:#5c57a0;letter-spacing:0.858px;-webkit-text-stroke:0">Ayer 21:49:43</div>
<div class="a" style="left:269px;top:128px;width:539px;height:18px;background:#bcd4cc"></div>
<div class="a dh" style="left:260px;top:137px;width:9px"></div>
<svg class="a" style="left:268px;top:128px" width="40" height="18" viewBox="0 0 40 18"><rect x="3.5" y="6.3" width="9.5" height="6.3" fill="#c8c8e8" stroke="#505080" stroke-width="1"/>
<path d="M4.5 7.5L8 10L11 8" fill="none" stroke="#f0f0ff" stroke-width="0.8"/>
<path d="M11 4.2L11.9 6.4L14.2 6.6L12.4 8.1L13 10.4L11 9.1L9 10.4L9.6 8.1L7.8 6.6L10.1 6.4Z" fill="#ffd820" stroke="#d09000" stroke-width="0.5"/><path d="M14.5 7.5L19 6.5L22.5 8V14L14.5 14Z" fill="#f4f0e0" stroke="#807850" stroke-width="0.7"/><path d="M16.8 5.8C16.8 2.5 21.8 2.5 21.8 5.8C21.8 8 19.3 8 19.3 10" fill="none" stroke="#000" stroke-width="2.6" transform="translate(0.8,0.6)"/>
<path d="M19.3 11.5V13.5" stroke="#000" stroke-width="2.6" transform="translate(0.8,0.3)"/>
<path d="M16.8 5.8C16.8 2.5 21.8 2.5 21.8 5.8C21.8 8 19.3 8 19.3 10" fill="none" stroke="#0000ff" stroke-width="2.4"/>
<path d="M19.3 11.5V13.5" stroke="#0000ff" stroke-width="2.4"/><rect x="26.5" y="3.5" width="10" height="10.5" fill="#ffffff" stroke="#c8c8c8" stroke-width="0.8"/>
<path d="M28 8.5V11" stroke="#a0a0e0" stroke-width="0.8"/><path d="M28.8 5.8C28.8 2.5 33.8 2.5 33.8 5.8C33.8 8 31.3 8 31.3 10" fill="none" stroke="#000" stroke-width="2.6" transform="translate(0.8,0.6)"/>
<path d="M31.3 11.5V13.5" stroke="#000" stroke-width="2.6" transform="translate(0.8,0.3)"/>
<path d="M28.8 5.8C28.8 2.5 33.8 2.5 33.8 5.8C33.8 8 31.3 8 31.3 10" fill="none" stroke="#0000ff" stroke-width="2.4"/>
<path d="M31.3 11.5V13.5" stroke="#0000ff" stroke-width="2.4"/></svg>
<div class="a ti" style="left:307.0px;top:130px;color:#5c57a0;letter-spacing:0.833px;-webkit-text-stroke:0">asdf</div>
<div class="a ti" style="left:371.0px;top:130px;color:#5c57a0;letter-spacing:0.543px;-webkit-text-stroke:0">Sergio González González</div>
<div class="a ti" style="left:536.5px;top:130px;color:#5c57a0;letter-spacing:0.858px;-webkit-text-stroke:0">Ayer 22:04:32</div>
<div class="a" style="left:269px;top:146px;width:539px;height:18px;background:#b0c8c0"></div>
<div class="a dh" style="left:260px;top:155px;width:9px"></div>
<svg class="a" style="left:268px;top:146px" width="40" height="18" viewBox="0 0 40 18"><rect x="3.5" y="6.3" width="9.5" height="6.3" fill="#c8c8e8" stroke="#505080" stroke-width="1"/>
<path d="M4.5 7.5L8 10L11 8" fill="none" stroke="#f0f0ff" stroke-width="0.8"/>
<path d="M11 4.2L11.9 6.4L14.2 6.6L12.4 8.1L13 10.4L11 9.1L9 10.4L9.6 8.1L7.8 6.6L10.1 6.4Z" fill="#ffd820" stroke="#d09000" stroke-width="0.5"/><path d="M14.5 7.5L19 6.5L22.5 8V14L14.5 14Z" fill="#f4f0e0" stroke="#807850" stroke-width="0.7"/><path d="M16.8 5.8C16.8 2.5 21.8 2.5 21.8 5.8C21.8 8 19.3 8 19.3 10" fill="none" stroke="#000" stroke-width="2.6" transform="translate(0.8,0.6)"/>
<path d="M19.3 11.5V13.5" stroke="#000" stroke-width="2.6" transform="translate(0.8,0.3)"/>
<path d="M16.8 5.8C16.8 2.5 21.8 2.5 21.8 5.8C21.8 8 19.3 8 19.3 10" fill="none" stroke="#0000ff" stroke-width="2.4"/>
<path d="M19.3 11.5V13.5" stroke="#0000ff" stroke-width="2.4"/><rect x="26.5" y="3.5" width="10" height="10.5" fill="#ffffff" stroke="#c8c8c8" stroke-width="0.8"/>
<path d="M28 8.5V11" stroke="#a0a0e0" stroke-width="0.8"/><path d="M28.8 5.8C28.8 2.5 33.8 2.5 33.8 5.8C33.8 8 31.3 8 31.3 10" fill="none" stroke="#000" stroke-width="2.6" transform="translate(0.8,0.6)"/>
<path d="M31.3 11.5V13.5" stroke="#000" stroke-width="2.6" transform="translate(0.8,0.3)"/>
<path d="M28.8 5.8C28.8 2.5 33.8 2.5 33.8 5.8C33.8 8 31.3 8 31.3 10" fill="none" stroke="#0000ff" stroke-width="2.4"/>
<path d="M31.3 11.5V13.5" stroke="#0000ff" stroke-width="2.4"/></svg>
<div class="a ti" style="left:307.0px;top:148px;color:#5c57a0;letter-spacing:0.833px;-webkit-text-stroke:0">asdf</div>
<div class="a ti" style="left:371.0px;top:148px;color:#5c57a0;letter-spacing:0.543px;-webkit-text-stroke:0">Sergio González González</div>
<div class="a ti" style="left:536.5px;top:148px;color:#5c57a0;letter-spacing:0.858px;-webkit-text-stroke:0">Ayer 22:09:25</div>
<div class="a" style="left:360px;top:177px;width:1px;height:1px;background:#8a8a8a"></div>
<div class="a" style="left:361px;top:178px;width:1px;height:1px;background:#fff"></div>
<div class="a" style="left:365px;top:177px;width:1px;height:1px;background:#8a8a8a"></div>
<div class="a" style="left:366px;top:178px;width:1px;height:1px;background:#fff"></div>
<div class="a" style="left:370px;top:177px;width:1px;height:1px;background:#8a8a8a"></div>
<div class="a" style="left:371px;top:178px;width:1px;height:1px;background:#fff"></div>
<div class="a" style="left:375px;top:177px;width:1px;height:1px;background:#8a8a8a"></div>
<div class="a" style="left:376px;top:178px;width:1px;height:1px;background:#fff"></div>
<div class="a" style="left:380px;top:177px;width:1px;height:1px;background:#8a8a8a"></div>
<div class="a" style="left:381px;top:178px;width:1px;height:1px;background:#fff"></div>
<div class="a" style="left:385px;top:177px;width:1px;height:1px;background:#8a8a8a"></div>
<div class="a" style="left:386px;top:178px;width:1px;height:1px;background:#fff"></div>
<div class="a" style="left:390px;top:177px;width:1px;height:1px;background:#8a8a8a"></div>
<div class="a" style="left:391px;top:178px;width:1px;height:1px;background:#fff"></div>
<div class="a" style="left:395px;top:177px;width:1px;height:1px;background:#8a8a8a"></div>
<div class="a" style="left:396px;top:178px;width:1px;height:1px;background:#fff"></div>
<div class="a" style="left:400px;top:177px;width:1px;height:1px;background:#8a8a8a"></div>
<div class="a" style="left:401px;top:178px;width:1px;height:1px;background:#fff"></div>
<div class="a" style="left:405px;top:177px;width:1px;height:1px;background:#8a8a8a"></div>
<div class="a" style="left:406px;top:178px;width:1px;height:1px;background:#fff"></div>
<div class="a" style="left:410px;top:177px;width:1px;height:1px;background:#8a8a8a"></div>
<div class="a" style="left:411px;top:178px;width:1px;height:1px;background:#fff"></div>
<div class="a" style="left:415px;top:177px;width:1px;height:1px;background:#8a8a8a"></div>
<div class="a" style="left:416px;top:178px;width:1px;height:1px;background:#fff"></div>
<div class="a" style="left:420px;top:177px;width:1px;height:1px;background:#8a8a8a"></div>
<div class="a" style="left:421px;top:178px;width:1px;height:1px;background:#fff"></div>
<div class="a" style="left:425px;top:177px;width:1px;height:1px;background:#8a8a8a"></div>
<div class="a" style="left:426px;top:178px;width:1px;height:1px;background:#fff"></div>
<div class="a" style="left:430px;top:177px;width:1px;height:1px;background:#8a8a8a"></div>
<div class="a" style="left:431px;top:178px;width:1px;height:1px;background:#fff"></div>
<div class="a" style="left:435px;top:177px;width:1px;height:1px;background:#8a8a8a"></div>
<div class="a" style="left:436px;top:178px;width:1px;height:1px;background:#fff"></div>
<div class="a" style="left:440px;top:177px;width:1px;height:1px;background:#8a8a8a"></div>
<div class="a" style="left:441px;top:178px;width:1px;height:1px;background:#fff"></div>
<div class="a" style="left:445px;top:177px;width:1px;height:1px;background:#8a8a8a"></div>
<div class="a" style="left:446px;top:178px;width:1px;height:1px;background:#fff"></div>
<div class="a" style="left:450px;top:177px;width:1px;height:1px;background:#8a8a8a"></div>
<div class="a" style="left:451px;top:178px;width:1px;height:1px;background:#fff"></div>
<div class="a" style="left:455px;top:177px;width:1px;height:1px;background:#8a8a8a"></div>
<div class="a" style="left:456px;top:178px;width:1px;height:1px;background:#fff"></div>
<div class="a" style="left:460px;top:177px;width:1px;height:1px;background:#8a8a8a"></div>
<div class="a" style="left:461px;top:178px;width:1px;height:1px;background:#fff"></div>
<div class="a" style="left:465px;top:177px;width:1px;height:1px;background:#8a8a8a"></div>
<div class="a" style="left:466px;top:178px;width:1px;height:1px;background:#fff"></div>
<div class="a" style="left:470px;top:177px;width:1px;height:1px;background:#8a8a8a"></div>
<div class="a" style="left:471px;top:178px;width:1px;height:1px;background:#fff"></div>
<div class="a" style="left:475px;top:177px;width:1px;height:1px;background:#8a8a8a"></div>
<div class="a" style="left:476px;top:178px;width:1px;height:1px;background:#fff"></div>
<div class="a" style="left:480px;top:177px;width:1px;height:1px;background:#8a8a8a"></div>
<div class="a" style="left:481px;top:178px;width:1px;height:1px;background:#fff"></div>
<div class="a" style="left:485px;top:177px;width:1px;height:1px;background:#8a8a8a"></div>
<div class="a" style="left:486px;top:178px;width:1px;height:1px;background:#fff"></div>
<div class="a" style="left:490px;top:177px;width:1px;height:1px;background:#8a8a8a"></div>
<div class="a" style="left:491px;top:178px;width:1px;height:1px;background:#fff"></div>
<div class="a" style="left:495px;top:177px;width:1px;height:1px;background:#8a8a8a"></div>
<div class="a" style="left:496px;top:178px;width:1px;height:1px;background:#fff"></div>
<div class="a" style="left:500px;top:177px;width:1px;height:1px;background:#8a8a8a"></div>
<div class="a" style="left:501px;top:178px;width:1px;height:1px;background:#fff"></div>
<div class="a" style="left:505px;top:177px;width:1px;height:1px;background:#8a8a8a"></div>
<div class="a" style="left:506px;top:178px;width:1px;height:1px;background:#fff"></div>
<div class="a" style="left:510px;top:177px;width:1px;height:1px;background:#8a8a8a"></div>
<div class="a" style="left:511px;top:178px;width:1px;height:1px;background:#fff"></div>
<div class="a" style="left:515px;top:177px;width:1px;height:1px;background:#8a8a8a"></div>
<div class="a" style="left:516px;top:178px;width:1px;height:1px;background:#fff"></div>
<div class="a" style="left:520px;top:177px;width:1px;height:1px;background:#8a8a8a"></div>
<div class="a" style="left:521px;top:178px;width:1px;height:1px;background:#fff"></div>
<div class="a" style="left:525px;top:177px;width:1px;height:1px;background:#8a8a8a"></div>
<div class="a" style="left:526px;top:178px;width:1px;height:1px;background:#fff"></div>
<div class="a" style="left:530px;top:177px;width:1px;height:1px;background:#8a8a8a"></div>
<div class="a" style="left:531px;top:178px;width:1px;height:1px;background:#fff"></div>
<div class="a" style="left:535px;top:177px;width:1px;height:1px;background:#8a8a8a"></div>
<div class="a" style="left:536px;top:178px;width:1px;height:1px;background:#fff"></div>
<div class="a" style="left:540px;top:177px;width:1px;height:1px;background:#8a8a8a"></div>
<div class="a" style="left:541px;top:178px;width:1px;height:1px;background:#fff"></div>
<div class="a" style="left:545px;top:177px;width:1px;height:1px;background:#8a8a8a"></div>
<div class="a" style="left:546px;top:178px;width:1px;height:1px;background:#fff"></div>
<div class="a" style="left:550px;top:177px;width:1px;height:1px;background:#8a8a8a"></div>
<div class="a" style="left:551px;top:178px;width:1px;height:1px;background:#fff"></div>
<div class="a" style="left:555px;top:177px;width:1px;height:1px;background:#8a8a8a"></div>
<div class="a" style="left:556px;top:178px;width:1px;height:1px;background:#fff"></div>
<div class="a" style="left:560px;top:177px;width:1px;height:1px;background:#8a8a8a"></div>
<div class="a" style="left:561px;top:178px;width:1px;height:1px;background:#fff"></div>
<div class="a" style="left:565px;top:177px;width:1px;height:1px;background:#8a8a8a"></div>
<div class="a" style="left:566px;top:178px;width:1px;height:1px;background:#fff"></div>
<div class="a" style="left:570px;top:177px;width:1px;height:1px;background:#8a8a8a"></div>
<div class="a" style="left:571px;top:178px;width:1px;height:1px;background:#fff"></div>
<div class="a" style="left:575px;top:177px;width:1px;height:1px;background:#8a8a8a"></div>
<div class="a" style="left:576px;top:178px;width:1px;height:1px;background:#fff"></div>
<div class="a" style="left:580px;top:177px;width:1px;height:1px;background:#8a8a8a"></div>
<div class="a" style="left:581px;top:178px;width:1px;height:1px;background:#fff"></div>
<div class="a" style="left:585px;top:177px;width:1px;height:1px;background:#8a8a8a"></div>
<div class="a" style="left:586px;top:178px;width:1px;height:1px;background:#fff"></div>
<div class="a" style="left:590px;top:177px;width:1px;height:1px;background:#8a8a8a"></div>
<div class="a" style="left:591px;top:178px;width:1px;height:1px;background:#fff"></div>
<div class="a" style="left:595px;top:177px;width:1px;height:1px;background:#8a8a8a"></div>
<div class="a" style="left:596px;top:178px;width:1px;height:1px;background:#fff"></div>
<div class="a" style="left:600px;top:177px;width:1px;height:1px;background:#8a8a8a"></div>
<div class="a" style="left:601px;top:178px;width:1px;height:1px;background:#fff"></div>
<div class="a" style="left:605px;top:177px;width:1px;height:1px;background:#8a8a8a"></div>
<div class="a" style="left:606px;top:178px;width:1px;height:1px;background:#fff"></div>
<div class="a" style="left:610px;top:177px;width:1px;height:1px;background:#8a8a8a"></div>
<div class="a" style="left:611px;top:178px;width:1px;height:1px;background:#fff"></div>
<div class="a" style="left:615px;top:177px;width:1px;height:1px;background:#8a8a8a"></div>
<div class="a" style="left:616px;top:178px;width:1px;height:1px;background:#fff"></div>
<div class="a" style="left:620px;top:177px;width:1px;height:1px;background:#8a8a8a"></div>
<div class="a" style="left:621px;top:178px;width:1px;height:1px;background:#fff"></div>
<div class="a" style="left:625px;top:177px;width:1px;height:1px;background:#8a8a8a"></div>
<div class="a" style="left:626px;top:178px;width:1px;height:1px;background:#fff"></div>
<div class="a" style="left:630px;top:177px;width:1px;height:1px;background:#8a8a8a"></div>
<div class="a" style="left:631px;top:178px;width:1px;height:1px;background:#fff"></div>
<div class="a" style="left:635px;top:177px;width:1px;height:1px;background:#8a8a8a"></div>
<div class="a" style="left:636px;top:178px;width:1px;height:1px;background:#fff"></div>
<div class="a" style="left:640px;top:177px;width:1px;height:1px;background:#8a8a8a"></div>
<div class="a" style="left:641px;top:178px;width:1px;height:1px;background:#fff"></div>
<div class="a" style="left:645px;top:177px;width:1px;height:1px;background:#8a8a8a"></div>
<div class="a" style="left:646px;top:178px;width:1px;height:1px;background:#fff"></div>
<div class="a" style="left:650px;top:177px;width:1px;height:1px;background:#8a8a8a"></div>
<div class="a" style="left:651px;top:178px;width:1px;height:1px;background:#fff"></div>
<div class="a" style="left:655px;top:177px;width:1px;height:1px;background:#8a8a8a"></div>
<div class="a" style="left:656px;top:178px;width:1px;height:1px;background:#fff"></div>
<div class="a" style="left:660px;top:177px;width:1px;height:1px;background:#8a8a8a"></div>
<div class="a" style="left:661px;top:178px;width:1px;height:1px;background:#fff"></div>
<div class="a" style="left:665px;top:177px;width:1px;height:1px;background:#8a8a8a"></div>
<div class="a" style="left:666px;top:178px;width:1px;height:1px;background:#fff"></div>
<div class="a" style="left:670px;top:177px;width:1px;height:1px;background:#8a8a8a"></div>
<div class="a" style="left:671px;top:178px;width:1px;height:1px;background:#fff"></div>
<div class="a" style="left:675px;top:177px;width:1px;height:1px;background:#8a8a8a"></div>
<div class="a" style="left:676px;top:178px;width:1px;height:1px;background:#fff"></div>
<div class="a" style="left:680px;top:177px;width:1px;height:1px;background:#8a8a8a"></div>
<div class="a" style="left:681px;top:178px;width:1px;height:1px;background:#fff"></div>
<div class="a" style="left:685px;top:177px;width:1px;height:1px;background:#8a8a8a"></div>
<div class="a" style="left:686px;top:178px;width:1px;height:1px;background:#fff"></div>
<div class="a" style="left:690px;top:177px;width:1px;height:1px;background:#8a8a8a"></div>
<div class="a" style="left:691px;top:178px;width:1px;height:1px;background:#fff"></div>
<div class="a" style="left:695px;top:177px;width:1px;height:1px;background:#8a8a8a"></div>
<div class="a" style="left:696px;top:178px;width:1px;height:1px;background:#fff"></div>
<div class="a" style="left:247px;top:179px;width:563px;height:348px;background:#bcd4cc;border:1px solid;border-color:#a8a8a8 #858585 #858585 #a8a8a8;border-radius:2px;box-shadow:inset 1px 1px 0 #858585,inset -1px -1px 0 #ffffff"></div>
<div class="a" style="left:249px;top:181px;width:15px;height:344px;background:#d2d2d2"></div>
<div class="a" style="left:792px;top:181px;width:16px;height:344px;background:#d2d2d2"></div>
<div class="a" style="left:360px;top:529px;width:1px;height:1px;background:#8a8a8a"></div>
<div class="a" style="left:361px;top:530px;width:1px;height:1px;background:#fff"></div>
<div class="a" style="left:365px;top:529px;width:1px;height:1px;background:#8a8a8a"></div>
<div class="a" style="left:366px;top:530px;width:1px;height:1px;background:#fff"></div>
<div class="a" style="left:370px;top:529px;width:1px;height:1px;background:#8a8a8a"></div>
<div class="a" style="left:371px;top:530px;width:1px;height:1px;background:#fff"></div>
<div class="a" style="left:375px;top:529px;width:1px;height:1px;background:#8a8a8a"></div>
<div class="a" style="left:376px;top:530px;width:1px;height:1px;background:#fff"></div>
<div class="a" style="left:380px;top:529px;width:1px;height:1px;background:#8a8a8a"></div>
<div class="a" style="left:381px;top:530px;width:1px;height:1px;background:#fff"></div>
<div class="a" style="left:385px;top:529px;width:1px;height:1px;background:#8a8a8a"></div>
<div class="a" style="left:386px;top:530px;width:1px;height:1px;background:#fff"></div>
<div class="a" style="left:390px;top:529px;width:1px;height:1px;background:#8a8a8a"></div>
<div class="a" style="left:391px;top:530px;width:1px;height:1px;background:#fff"></div>
<div class="a" style="left:395px;top:529px;width:1px;height:1px;background:#8a8a8a"></div>
<div class="a" style="left:396px;top:530px;width:1px;height:1px;background:#fff"></div>
<div class="a" style="left:400px;top:529px;width:1px;height:1px;background:#8a8a8a"></div>
<div class="a" style="left:401px;top:530px;width:1px;height:1px;background:#fff"></div>
<div class="a" style="left:405px;top:529px;width:1px;height:1px;background:#8a8a8a"></div>
<div class="a" style="left:406px;top:530px;width:1px;height:1px;background:#fff"></div>
<div class="a" style="left:410px;top:529px;width:1px;height:1px;background:#8a8a8a"></div>
<div class="a" style="left:411px;top:530px;width:1px;height:1px;background:#fff"></div>
<div class="a" style="left:415px;top:529px;width:1px;height:1px;background:#8a8a8a"></div>
<div class="a" style="left:416px;top:530px;width:1px;height:1px;background:#fff"></div>
<div class="a" style="left:420px;top:529px;width:1px;height:1px;background:#8a8a8a"></div>
<div class="a" style="left:421px;top:530px;width:1px;height:1px;background:#fff"></div>
<div class="a" style="left:425px;top:529px;width:1px;height:1px;background:#8a8a8a"></div>
<div class="a" style="left:426px;top:530px;width:1px;height:1px;background:#fff"></div>
<div class="a" style="left:430px;top:529px;width:1px;height:1px;background:#8a8a8a"></div>
<div class="a" style="left:431px;top:530px;width:1px;height:1px;background:#fff"></div>
<div class="a" style="left:435px;top:529px;width:1px;height:1px;background:#8a8a8a"></div>
<div class="a" style="left:436px;top:530px;width:1px;height:1px;background:#fff"></div>
<div class="a" style="left:440px;top:529px;width:1px;height:1px;background:#8a8a8a"></div>
<div class="a" style="left:441px;top:530px;width:1px;height:1px;background:#fff"></div>
<div class="a" style="left:445px;top:529px;width:1px;height:1px;background:#8a8a8a"></div>
<div class="a" style="left:446px;top:530px;width:1px;height:1px;background:#fff"></div>
<div class="a" style="left:450px;top:529px;width:1px;height:1px;background:#8a8a8a"></div>
<div class="a" style="left:451px;top:530px;width:1px;height:1px;background:#fff"></div>
<div class="a" style="left:455px;top:529px;width:1px;height:1px;background:#8a8a8a"></div>
<div class="a" style="left:456px;top:530px;width:1px;height:1px;background:#fff"></div>
<div class="a" style="left:460px;top:529px;width:1px;height:1px;background:#8a8a8a"></div>
<div class="a" style="left:461px;top:530px;width:1px;height:1px;background:#fff"></div>
<div class="a" style="left:465px;top:529px;width:1px;height:1px;background:#8a8a8a"></div>
<div class="a" style="left:466px;top:530px;width:1px;height:1px;background:#fff"></div>
<div class="a" style="left:470px;top:529px;width:1px;height:1px;background:#8a8a8a"></div>
<div class="a" style="left:471px;top:530px;width:1px;height:1px;background:#fff"></div>
<div class="a" style="left:475px;top:529px;width:1px;height:1px;background:#8a8a8a"></div>
<div class="a" style="left:476px;top:530px;width:1px;height:1px;background:#fff"></div>
<div class="a" style="left:480px;top:529px;width:1px;height:1px;background:#8a8a8a"></div>
<div class="a" style="left:481px;top:530px;width:1px;height:1px;background:#fff"></div>
<div class="a" style="left:485px;top:529px;width:1px;height:1px;background:#8a8a8a"></div>
<div class="a" style="left:486px;top:530px;width:1px;height:1px;background:#fff"></div>
<div class="a" style="left:490px;top:529px;width:1px;height:1px;background:#8a8a8a"></div>
<div class="a" style="left:491px;top:530px;width:1px;height:1px;background:#fff"></div>
<div class="a" style="left:495px;top:529px;width:1px;height:1px;background:#8a8a8a"></div>
<div class="a" style="left:496px;top:530px;width:1px;height:1px;background:#fff"></div>
<div class="a" style="left:500px;top:529px;width:1px;height:1px;background:#8a8a8a"></div>
<div class="a" style="left:501px;top:530px;width:1px;height:1px;background:#fff"></div>
<div class="a" style="left:505px;top:529px;width:1px;height:1px;background:#8a8a8a"></div>
<div class="a" style="left:506px;top:530px;width:1px;height:1px;background:#fff"></div>
<div class="a" style="left:510px;top:529px;width:1px;height:1px;background:#8a8a8a"></div>
<div class="a" style="left:511px;top:530px;width:1px;height:1px;background:#fff"></div>
<div class="a" style="left:515px;top:529px;width:1px;height:1px;background:#8a8a8a"></div>
<div class="a" style="left:516px;top:530px;width:1px;height:1px;background:#fff"></div>
<div class="a" style="left:520px;top:529px;width:1px;height:1px;background:#8a8a8a"></div>
<div class="a" style="left:521px;top:530px;width:1px;height:1px;background:#fff"></div>
<div class="a" style="left:525px;top:529px;width:1px;height:1px;background:#8a8a8a"></div>
<div class="a" style="left:526px;top:530px;width:1px;height:1px;background:#fff"></div>
<div class="a" style="left:530px;top:529px;width:1px;height:1px;background:#8a8a8a"></div>
<div class="a" style="left:531px;top:530px;width:1px;height:1px;background:#fff"></div>
<div class="a" style="left:535px;top:529px;width:1px;height:1px;background:#8a8a8a"></div>
<div class="a" style="left:536px;top:530px;width:1px;height:1px;background:#fff"></div>
<div class="a" style="left:540px;top:529px;width:1px;height:1px;background:#8a8a8a"></div>
<div class="a" style="left:541px;top:530px;width:1px;height:1px;background:#fff"></div>
<div class="a" style="left:545px;top:529px;width:1px;height:1px;background:#8a8a8a"></div>
<div class="a" style="left:546px;top:530px;width:1px;height:1px;background:#fff"></div>
<div class="a" style="left:550px;top:529px;width:1px;height:1px;background:#8a8a8a"></div>
<div class="a" style="left:551px;top:530px;width:1px;height:1px;background:#fff"></div>
<div class="a" style="left:555px;top:529px;width:1px;height:1px;background:#8a8a8a"></div>
<div class="a" style="left:556px;top:530px;width:1px;height:1px;background:#fff"></div>
<div class="a" style="left:560px;top:529px;width:1px;height:1px;background:#8a8a8a"></div>
<div class="a" style="left:561px;top:530px;width:1px;height:1px;background:#fff"></div>
<div class="a" style="left:565px;top:529px;width:1px;height:1px;background:#8a8a8a"></div>
<div class="a" style="left:566px;top:530px;width:1px;height:1px;background:#fff"></div>
<div class="a" style="left:570px;top:529px;width:1px;height:1px;background:#8a8a8a"></div>
<div class="a" style="left:571px;top:530px;width:1px;height:1px;background:#fff"></div>
<div class="a" style="left:575px;top:529px;width:1px;height:1px;background:#8a8a8a"></div>
<div class="a" style="left:576px;top:530px;width:1px;height:1px;background:#fff"></div>
<div class="a" style="left:580px;top:529px;width:1px;height:1px;background:#8a8a8a"></div>
<div class="a" style="left:581px;top:530px;width:1px;height:1px;background:#fff"></div>
<div class="a" style="left:585px;top:529px;width:1px;height:1px;background:#8a8a8a"></div>
<div class="a" style="left:586px;top:530px;width:1px;height:1px;background:#fff"></div>
<div class="a" style="left:590px;top:529px;width:1px;height:1px;background:#8a8a8a"></div>
<div class="a" style="left:591px;top:530px;width:1px;height:1px;background:#fff"></div>
<div class="a" style="left:595px;top:529px;width:1px;height:1px;background:#8a8a8a"></div>
<div class="a" style="left:596px;top:530px;width:1px;height:1px;background:#fff"></div>
<div class="a" style="left:600px;top:529px;width:1px;height:1px;background:#8a8a8a"></div>
<div class="a" style="left:601px;top:530px;width:1px;height:1px;background:#fff"></div>
<div class="a" style="left:605px;top:529px;width:1px;height:1px;background:#8a8a8a"></div>
<div class="a" style="left:606px;top:530px;width:1px;height:1px;background:#fff"></div>
<div class="a" style="left:610px;top:529px;width:1px;height:1px;background:#8a8a8a"></div>
<div class="a" style="left:611px;top:530px;width:1px;height:1px;background:#fff"></div>
<div class="a" style="left:615px;top:529px;width:1px;height:1px;background:#8a8a8a"></div>
<div class="a" style="left:616px;top:530px;width:1px;height:1px;background:#fff"></div>
<div class="a" style="left:620px;top:529px;width:1px;height:1px;background:#8a8a8a"></div>
<div class="a" style="left:621px;top:530px;width:1px;height:1px;background:#fff"></div>
<div class="a" style="left:625px;top:529px;width:1px;height:1px;background:#8a8a8a"></div>
<div class="a" style="left:626px;top:530px;width:1px;height:1px;background:#fff"></div>
<div class="a" style="left:630px;top:529px;width:1px;height:1px;background:#8a8a8a"></div>
<div class="a" style="left:631px;top:530px;width:1px;height:1px;background:#fff"></div>
<div class="a" style="left:635px;top:529px;width:1px;height:1px;background:#8a8a8a"></div>
<div class="a" style="left:636px;top:530px;width:1px;height:1px;background:#fff"></div>
<div class="a" style="left:640px;top:529px;width:1px;height:1px;background:#8a8a8a"></div>
<div class="a" style="left:641px;top:530px;width:1px;height:1px;background:#fff"></div>
<div class="a" style="left:645px;top:529px;width:1px;height:1px;background:#8a8a8a"></div>
<div class="a" style="left:646px;top:530px;width:1px;height:1px;background:#fff"></div>
<div class="a" style="left:650px;top:529px;width:1px;height:1px;background:#8a8a8a"></div>
<div class="a" style="left:651px;top:530px;width:1px;height:1px;background:#fff"></div>
<div class="a" style="left:655px;top:529px;width:1px;height:1px;background:#8a8a8a"></div>
<div class="a" style="left:656px;top:530px;width:1px;height:1px;background:#fff"></div>
<div class="a" style="left:660px;top:529px;width:1px;height:1px;background:#8a8a8a"></div>
<div class="a" style="left:661px;top:530px;width:1px;height:1px;background:#fff"></div>
<div class="a" style="left:665px;top:529px;width:1px;height:1px;background:#8a8a8a"></div>
<div class="a" style="left:666px;top:530px;width:1px;height:1px;background:#fff"></div>
<div class="a" style="left:670px;top:529px;width:1px;height:1px;background:#8a8a8a"></div>
<div class="a" style="left:671px;top:530px;width:1px;height:1px;background:#fff"></div>
<div class="a" style="left:675px;top:529px;width:1px;height:1px;background:#8a8a8a"></div>
<div class="a" style="left:676px;top:530px;width:1px;height:1px;background:#fff"></div>
<div class="a" style="left:680px;top:529px;width:1px;height:1px;background:#8a8a8a"></div>
<div class="a" style="left:681px;top:530px;width:1px;height:1px;background:#fff"></div>
<div class="a" style="left:685px;top:529px;width:1px;height:1px;background:#8a8a8a"></div>
<div class="a" style="left:686px;top:530px;width:1px;height:1px;background:#fff"></div>
<div class="a" style="left:690px;top:529px;width:1px;height:1px;background:#8a8a8a"></div>
<div class="a" style="left:691px;top:530px;width:1px;height:1px;background:#fff"></div>
<div class="a" style="left:695px;top:529px;width:1px;height:1px;background:#8a8a8a"></div>
<div class="a" style="left:696px;top:530px;width:1px;height:1px;background:#fff"></div>
<div class="a " style="left:251px;top:204px;font-size:12px;width:11px;text-align:center;line-height:14px">M</div>
<div class="a " style="left:251px;top:221px;font-size:12px;width:11px;text-align:center;line-height:14px">e</div>
<div class="a " style="left:251px;top:238px;font-size:12px;width:11px;text-align:center;line-height:14px">n</div>
<div class="a " style="left:251px;top:255px;font-size:12px;width:11px;text-align:center;line-height:14px">s</div>
<div class="a " style="left:251px;top:272px;font-size:12px;width:11px;text-align:center;line-height:14px">a</div>
<div class="a " style="left:251px;top:289px;font-size:12px;width:11px;text-align:center;line-height:14px">j</div>
<div class="a " style="left:251px;top:306px;font-size:12px;width:11px;text-align:center;line-height:14px">e</div>
<div class="a " style="left:251px;top:340px;font-size:12px;width:11px;text-align:center;line-height:14px">N</div>
<div class="a " style="left:251px;top:357px;font-size:12px;width:11px;text-align:center;line-height:14px">o</div>
<div class="a " style="left:251px;top:391px;font-size:12px;width:11px;text-align:center;line-height:14px">H</div>
<div class="a " style="left:251px;top:408px;font-size:12px;width:11px;text-align:center;line-height:14px">T</div>
<div class="a " style="left:251px;top:425px;font-size:12px;width:11px;text-align:center;line-height:14px">M</div>
<div class="a " style="left:251px;top:442px;font-size:12px;width:11px;text-align:center;line-height:14px">L</div>
<div class="a" style="left:274px;top:192px;width:508px;height:91px;background:#dedede;border:1px solid #000"></div>
<div class="a" style="left:275px;top:193px;width:506px;height:26px;background:#f60000"></div>
<div class="a" style="left:275px;top:219px;width:506px;height:1px;background:#000"></div>
<div class="a mono" style="left:279px;top:198px;font-size:15px;font-weight:bold;letter-spacing:-1px;line-height:18px">hola</div>
<div class="a mono" style="left:277px;top:224px;font-size:13px;font-weight:bold;letter-spacing:0.2px;line-height:16px">De:</div>
<div class="a mono" style="left:325.6px;top:224px;font-size:13px;letter-spacing:0.27px;line-height:16px">sergio@todoscsi.gsr.pt (Sergio González González)</div>
<div class="a mono" style="left:277px;top:244px;font-size:13px;font-weight:bold;letter-spacing:0.2px;line-height:16px">Para:</div>
<div class="a mono" style="left:325.6px;top:244px;font-size:13px;letter-spacing:0.27px;line-height:16px">severa@todoscsi.gsr.pt</div>
<div class="a mono" style="left:277px;top:264px;font-size:13px;font-weight:bold;letter-spacing:0.2px;line-height:16px">Fecha:</div>
<div class="a mono" style="left:325.6px;top:264px;font-size:13px;letter-spacing:0.27px;line-height:16px">Ayer 21:20:41</div>
<div class="a" style="left:10px;top:532px;width:800px;height:1px;background:#f0f0f0"></div>
<div class="a" style="left:12px;top:535px;width:626px;height:20px;border:1px solid #9a9a9a;border-radius:2px;box-shadow:inset 1px 1px 0 #d4d4d4"></div>
<div class="a" style="left:641px;top:535px;width:166px;height:20px;border:1px solid #9a9a9a;border-radius:2px;box-shadow:inset 1px 1px 0 #d4d4d4"></div>
<div class="a" style="left:10px;top:556px;width:800px;height:18px;background:#336699"></div>
<div class="a" style="left:10px;top:574px;width:800px;height:1px;background:#202020"></div>
<div class="a" style="left:8px;top:575px;width:803px;height:1px;background:#dcdcdc"></div>
<div class="a" style="left:8px;top:576px;width:804px;height:1px;background:#909090"></div>
<div class="a" style="left:9px;top:577px;width:804px;height:1px;background:#404040"></div>
<div class="a " style="left:302px;top:560px;color:#fff;font-size:10px;font-weight:bold;letter-spacing:0.2px;line-height:12px;white-space:nowrap">IMAP-GSR.PT/ENTRANTE - KMAIL</div>
<div class="a" style="left:767px;top:565px;width:8px;height:2px;background:#1a3350"></div>
<div class="a" style="left:766px;top:564px;width:8px;height:1px;background:#fff"></div>
<div class="a" style="left:766px;top:565px;width:8px;height:1px;background:#c0d0e0"></div>
<div class="a" style="left:783px;top:562px;width:8px;height:8px;border:1px solid #1a3350;border-top-width:2px"></div>
<div class="a" style="left:782px;top:561px;width:8px;height:8px;border:1px solid #fff;border-top-width:2px;box-shadow:inset 1px 0 0 #c0d0e0, inset -1px -1px 0 #c0d0e0"></div>
<svg class="a" style="left:798px;top:561px" width="9" height="9" viewBox="0 0 9 9"><g shape-rendering="crispEdges"><path d="M1 1L8 8M8 1L1 8" stroke="#1a3350" stroke-width="1.2"/><path d="M0 0L7 7M7 0L0 7" stroke="#fff" stroke-width="1.2"/></g></svg>
</body></html>
